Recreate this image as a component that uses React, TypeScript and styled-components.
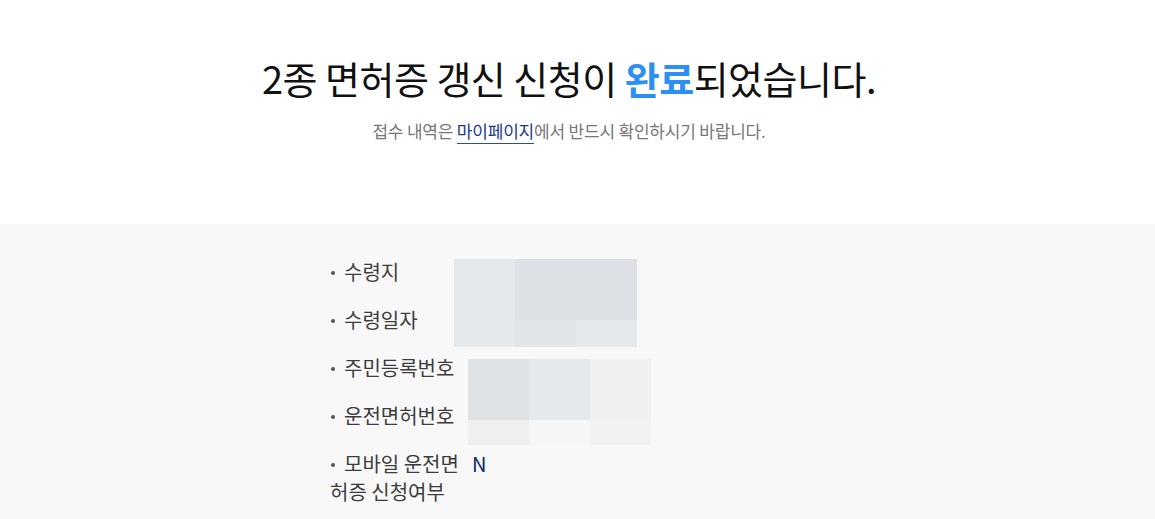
import React from "react";
import styled, { createGlobalStyle } from "styled-components";

const GlobalStyle = createGlobalStyle`
  html, body {
    margin: 0;
    padding: 0;
    background: #ffffff;
    font-family: "Noto Sans CJK KR", "Noto Sans", sans-serif;
  }
`;

type Row = { label: string; value?: string };

const rows: Row[] = [
  { label: "수령지" },
  { label: "수령일자" },
  { label: "주민등록번호" },
  { label: "운전면허번호" },
  { label: "모바일 운전면허증 신청여부", value: "N" },
];

// blurred (redacted) value blocks
const mosaicA = [
  ["#e5e8eb", "#dde1e5", "#dde1e5"],
  ["#e5e8eb", "#e1e5e8", "#e5e8eb"],
];
const mosaicB = [
  ["#dee2e5", "#e6e9ec", "#eff0f2"],
  ["#eeeff1", "#f6f6f7", "#f0f1f3"],
];

const App: React.FC = () => {
  return (
    <>
      <GlobalStyle />
      <Page>
        <Header>
          <Title>
            2종 면허증 갱신 신청이 <Accent>완료</Accent>되었습니다.
          </Title>
          <Sub>
            접수 내역은 <SubLink href="#">마이페이지</SubLink>에서 반드시 확인하시기 바랍니다.
          </Sub>
        </Header>
        <Body>
          <InfoList>
            <Label $row={1}>{rows[0].label}</Label>
            <Label $row={2}>{rows[1].label}</Label>
            <Mosaic $row={1} $shift={-14} $top={11} $lastRow={27}>
              {mosaicA.flat().map((c, i) => (
                <Cell key={i} style={{ background: c }} />
              ))}
            </Mosaic>
            <Label $row={3}>{rows[2].label}</Label>
            <Label $row={4}>{rows[3].label}</Label>
            <Mosaic $row={3} $shift={0} $top={15} $lastRow={25}>
              {mosaicB.flat().map((c, i) => (
                <Cell key={i} style={{ background: c }} />
              ))}
            </Mosaic>
            <Label $row={5}>{rows[4].label}</Label>
            <Value $row={5}>{rows[4].value}</Value>
          </InfoList>
        </Body>
      </Page>
    </>
  );
};

const Page = styled.div`
  min-height: 519px;
  display: flex;
  flex-direction: column;
`;

const Header = styled.div`
  height: 224px;
  box-sizing: border-box;
  padding: 52px 17px 0 0;
  text-align: center;
  background: #fff;
`;

const Title = styled.h1`
  margin: 0;
  font-size: 38px;
  line-height: 52px;
  font-weight: 400;
  letter-spacing: -0.5px;
  color: #111;
`;

const Accent = styled.span`
  color: #2b8ff4;
  font-weight: 700;
`;

const Sub = styled.p`
  margin: 15px 0 0;
  font-size: 17px;
  line-height: 24px;
  letter-spacing: -0.2px;
  color: #777;
`;

const SubLink = styled.a`
  color: #1a3a8a;
  text-decoration: none;
  border-bottom: 1px solid #1f4fb0;
`;

const Body = styled.div`
  flex: 1;
  background: #f8f8f8;
  padding: 24px 0 40px;
`;

const InfoList = styled.dl`
  margin: 0 0 0 330px;
  display: grid;
  grid-template-columns: 138px 200px;
  grid-auto-rows: 48px;
`;

const Label = styled.dt<{ $row: number }>`
  grid-column: 1;
  grid-row: ${(p) => p.$row};
  padding: 10px 0;
  font-size: 20px;
  line-height: 28px;
  color: #3c3c3c;
  word-break: break-all;

  &::before {
    content: "";
    display: inline-block;
    width: 4px;
    height: 4px;
    border-radius: 50%;
    background: #555;
    vertical-align: middle;
    margin: 0 9px 3px 1px;
  }
`;

const Value = styled.dd<{ $row: number }>`
  grid-column: 2;
  grid-row: ${(p) => p.$row};
  margin: 0;
  padding: 10px 0 0 4px;
  font-size: 20px;
  line-height: 28px;
  color: #0c2a63;
`;

const Mosaic = styled.dd<{ $row: number; $shift: number; $top: number; $lastRow: number }>`
  grid-column: 2;
  grid-row: ${(p) => p.$row} / span 2;
  margin: ${(p) => p.$top}px 0 0 ${(p) => p.$shift}px;
  align-self: start;
  display: grid;
  grid-template-columns: repeat(3, 61px);
  grid-template-rows: 61px ${(p) => p.$lastRow}px;
`;

const Cell = styled.div``;

export default App;
